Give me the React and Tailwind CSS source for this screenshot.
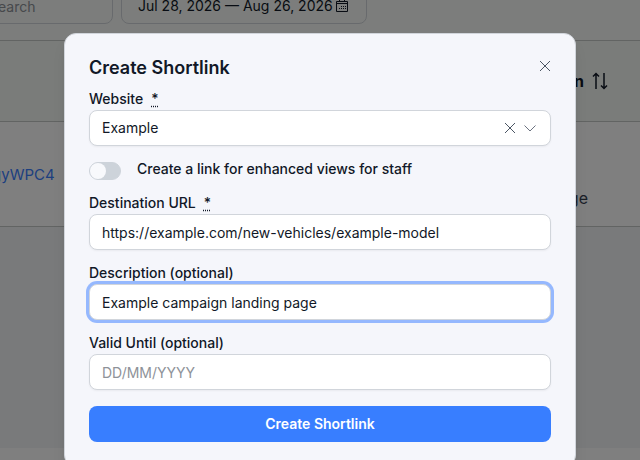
import { useState } from "react";

function CalendarIcon() {
  return (
    <svg width="12" height="14" viewBox="0 0 12 14" fill="none" stroke="currentColor" aria-hidden="true">
      <path d="M.5 2.5h11v10H.5zM.5 4.5h11M3.5 .5v2M8.5 .5v2" />
      <path d="M5 7.5h1M7 7.5h1M9 7.5h1M3 9.5h1M5 9.5h1M7 9.5h1M9 9.5h1" />
    </svg>
  );
}

function SortIcon() {
  return (
    <svg width="16" height="18" viewBox="0 0 16 18" fill="none" stroke="currentColor" strokeWidth="1.5" aria-hidden="true">
      <path d="M4 17V1.5M1 4.5l3-3 3 3M12 1v15.5M9 13.5l3 3 3-3" />
    </svg>
  );
}

function CloseIcon() {
  return (
    <svg width="12" height="12" viewBox="0 0 12 12" fill="none" stroke="currentColor" aria-hidden="true">
      <path d="M1 1l10 10M11 1L1 11" />
    </svg>
  );
}

function ChevronIcon() {
  return (
    <svg width="12" height="12" viewBox="0 0 12 12" fill="none" stroke="currentColor" aria-hidden="true">
      <path d="M.5 3.5L6 9l5.5-5.5" />
    </svg>
  );
}

function Field({ id, label, required, children }) {
  return (
    <div>
      <label htmlFor={id} className="block h-5 text-sm leading-[18px] font-medium">
        {label}
        {required && (
          <abbr title="required" className="ml-2 underline decoration-dotted underline-offset-2">
            *
          </abbr>
        )}
      </label>
      {children}
    </div>
  );
}

const inputClass =
  "block h-9 w-full rounded-lg border border-[#d1d5db] bg-white px-3 text-sm shadow-xs outline-none placeholder:text-[#8e9299] focus:ring-3 focus:ring-[#95b8fe]";

// Shortlinks list behind the dialog
function ShortlinksPage() {
  return (
    <div className="min-h-screen bg-[#f3f4f6]">
      <div className="-mt-3 -ml-6 flex h-13 gap-2 bg-[#f8fbf8]">
        <input
          type="search"
          aria-label="Search"
          placeholder="Search"
          className="h-9 w-[137px] rounded-lg border border-[#d1d5db] px-3 text-sm placeholder:text-[#8e9299]"
        />
        <button type="button" className="flex h-9 w-[246px] items-center justify-between rounded-lg border border-[#d1d5db] pr-[18px] pl-4 text-sm whitespace-nowrap">
          Jul 28, 2026 — Aug 26, 2026
          <CalendarIcon />
        </button>
      </div>
      <table className="w-full border-y border-[#c4c8c6]">
        <thead>
          <tr className="h-[81px] border-b border-[#c4c8c6] bg-[#f5f8f5]">
            <th aria-label="Link" />
            <th className="pr-8">
              <div className="flex items-center justify-end gap-2 font-bold">
                Description
                <SortIcon />
              </div>
            </th>
          </tr>
        </thead>
        <tbody>
          <tr className="h-[105px] bg-white">
            <td>
              <a href="#shortlink" className="-ml-2 text-[15px] text-[#3b7eff]">gyWPC4</a>
            </td>
            <td className="pt-12 pr-[52px] text-right text-base text-[#374151]">page</td>
          </tr>
        </tbody>
      </table>
    </div>
  );
}

export default function App() {
  const [website, setWebsite] = useState("Example");
  const [enhanced, setEnhanced] = useState(false);
  const [url, setUrl] = useState("https://example.com/new-vehicles/example-model");
  const [description, setDescription] = useState("Example campaign landing page");

  return (
    <div className="relative h-screen overflow-hidden font-['Inter',sans-serif] text-[#111827]">
      <ShortlinksPage />

      <div className="absolute inset-0 overflow-hidden bg-black/50 px-16 pt-[33px]">
        <div
          role="dialog"
          aria-modal="true"
          aria-labelledby="dialog-title"
          className="mx-auto max-w-lg rounded-xl border border-[#d1d5db] bg-[#f5f6fb] px-6 pt-5 pb-6 shadow-lg"
        >
          <div className="mb-2 flex h-7 items-center justify-between">
            <h2 id="dialog-title" className="text-lg leading-7 font-semibold">Create Shortlink</h2>
            <button type="button" aria-label="Close" className="h-6 self-start text-[#4b5563]">
              <CloseIcon />
            </button>
          </div>

          <form className="flex flex-col gap-[14px]" onSubmit={(e) => e.preventDefault()}>
            <Field id="website" label="Website" required>
              <div className="flex h-9 items-center gap-2 rounded-lg border border-[#d1d5db] bg-white pr-[14px] pl-3 text-[#6b7280] shadow-xs">
                <select
                  id="website"
                  value={website}
                  onChange={(e) => setWebsite(e.target.value)}
                  className="h-full flex-1 appearance-none text-sm text-[#111827] outline-none"
                >
                  <option value="" />
                  <option>Example</option>
                </select>
                <button type="button" aria-label="Clear" className="text-[#4b5563]" onClick={() => setWebsite("")}>
                  <CloseIcon />
                </button>
                <ChevronIcon />
              </div>
            </Field>

            {/* Staff views toggle */}
            <div className="flex h-5 items-end gap-4">
              <input
                id="enhanced"
                type="checkbox"
                role="switch"
                checked={enhanced}
                onChange={(e) => setEnhanced(e.target.checked)}
                className="h-[18px] w-8 appearance-none rounded-full border border-[#cdd3da] bg-[#cdd3da] before:block before:size-4 before:rounded-full before:bg-[#f8f9fc] checked:bg-[#3b7eff] checked:before:ml-[14px]"
              />
              <label htmlFor="enhanced" className="h-5 text-sm leading-[18px] font-medium">
                Create a link for enhanced views for staff
              </label>
            </div>

            <Field id="url" label="Destination URL" required>
              <input id="url" type="text" value={url} onChange={(e) => setUrl(e.target.value)} className={inputClass} />
            </Field>

            <Field id="description" label="Description (optional)">
              <input
                id="description"
                type="text"
                autoFocus
                value={description}
                onChange={(e) => setDescription(e.target.value)}
                className={inputClass}
              />
            </Field>

            <Field id="valid-until" label="Valid Until (optional)">
              <input id="valid-until" type="text" placeholder="DD/MM/YYYY" className={inputClass} />
            </Field>

            <button type="submit" className="mt-[2px] h-9 rounded-lg bg-[#387eff] text-sm font-semibold text-white">
              Create Shortlink
            </button>
          </form>
        </div>
      </div>
    </div>
  );
}
